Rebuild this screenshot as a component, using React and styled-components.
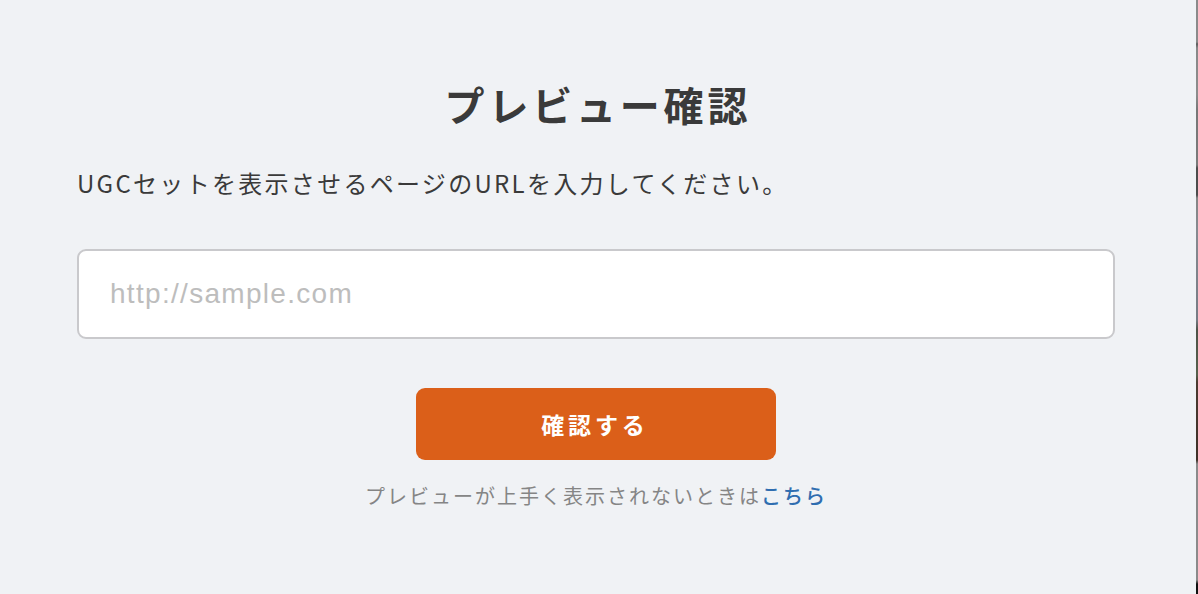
import React from "react";
import styled, { createGlobalStyle } from "styled-components";

const Global = createGlobalStyle`
  html, body { margin: 0; padding: 0; background: #f0f2f5; }
  body { font-family: "Noto Sans CJK JP", "Noto Sans", sans-serif; color: #3a3a3a; }
`;

const Page = styled.div`
  display: flex;
  height: 594px;
  width: 1198px;
  overflow: hidden;
`;

const Modal = styled.section`
  flex: 1;
  background: #f0f2f5;
  padding: 80px 81px 0 77px;
  display: flex;
  flex-direction: column;
  align-items: center;
`;

const EdgeStrip = styled.div`
  width: 2px;
  background: linear-gradient(
    to bottom,
    #8a8a8a 0px, #8a8a8a 42px, #5c5c5c 44px, #888 48px,
    #8c8c8c 95px, #777 110px, #7a7a7a 165px, #4c4c4c 168px, #4c4c4c 195px,
    #858585 198px, #868a90 230px, #767b84 320px, #4d5247 330px, #56604c 375px,
    #4a3a30 382px, #3e3028 460px, #8a8a8a 464px, #8a8a8a 580px, #111 584px, #111 594px
  );
`;

const Title = styled.h1`
  margin: 0;
  font-size: 40px;
  line-height: 48px;
  font-weight: 700;
  letter-spacing: 3.8px;
  padding-left: 3.8px;
  color: #3a3a3a;
  text-align: center;
`;

const Lead = styled.p`
  align-self: stretch;
  margin: 37px 0 0;
  font-size: 24px;
  line-height: 36px;
  letter-spacing: 2.3px;
  color: #3a3a3a;
`;

const UrlInput = styled.input`
  align-self: stretch;
  box-sizing: border-box;
  margin-top: 48px;
  height: 90px;
  border: 2px solid #c9c9cc;
  border-radius: 9px;
  background: #fff;
  padding: 0 31px;
  font-family: "Liberation Sans", Arial, sans-serif;
  font-size: 28px;
  letter-spacing: 1.3px;
  color: #333;
  outline: none;
  &::placeholder { color: #bdbdbd; }
`;

const SubmitButton = styled.button`
  margin-top: 49px;
  width: 360px;
  height: 72px;
  border: none;
  border-radius: 9px;
  background: #db5f19;
  color: #fff;
  font-family: "Noto Sans CJK JP", sans-serif;
  font-size: 23px;
  font-weight: 700;
  letter-spacing: 3.8px;
  padding-left: 3.8px;
  cursor: pointer;
`;

const Note = styled.p`
  margin: 21px 0 0;
  font-size: 20px;
  line-height: 30px;
  letter-spacing: 2px;
  color: #858585;
`;

const NoteLink = styled.a`
  color: #2f6db0;
  font-weight: 500;
  text-decoration: none;
`;

export default function App() {
  return (
    <>
      <Global />
      <Page>
        <Modal>
          <Title>プレビュー確認</Title>
          <Lead>UGCセットを表示させるページのURLを入力してください。</Lead>
          <UrlInput type="text" placeholder="http://sample.com" />
          <SubmitButton type="button">確認する</SubmitButton>
          <Note>
            プレビューが上手く表示されないときは<NoteLink href="#">こちら</NoteLink>
          </Note>
        </Modal>
        <EdgeStrip />
      </Page>
    </>
  );
}
